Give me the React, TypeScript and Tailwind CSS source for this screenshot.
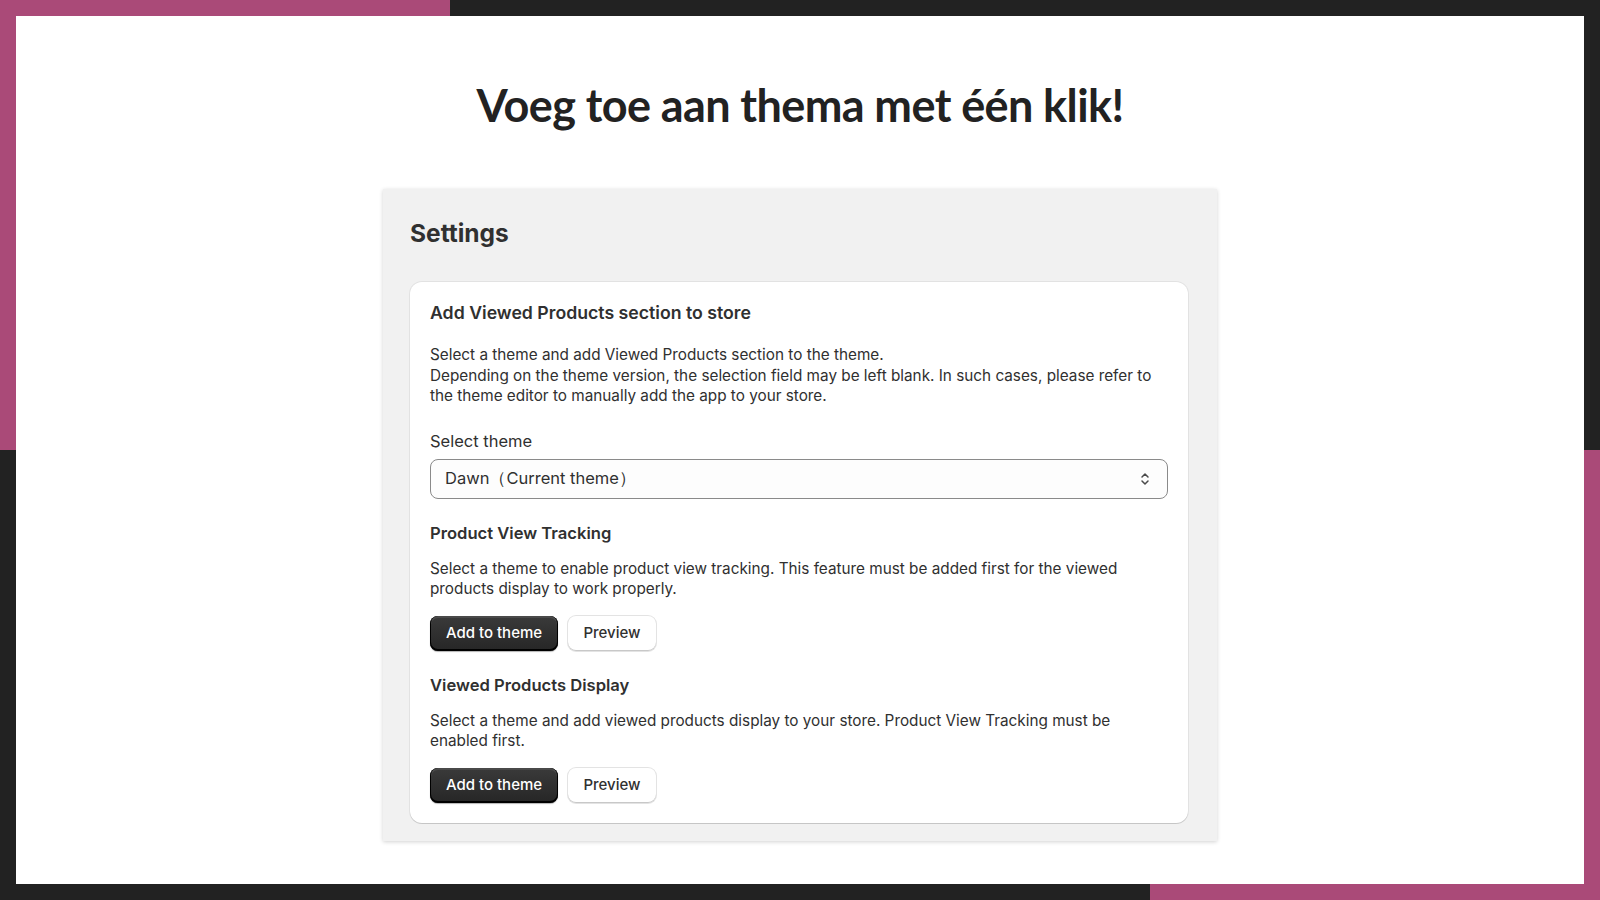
import React from "react";

const inter = { fontFamily: "Inter, 'Noto Sans', sans-serif" };

function Chevrons() {
    return (
        <svg width="12" height="16" viewBox="0 0 12 16" fill="none" stroke="#4a4a4a" strokeWidth="1.5" strokeLinecap="round" strokeLinejoin="round">
            <path d="M3 6l3-3 3 3" />
            <path d="M3 10l3 3 3-3" />
        </svg>
    );
}

function Buttons() {
    return (
        <div className="flex gap-[10px]">
            <button className="h-[35px] w-[128px] rounded-[8px] bg-[linear-gradient(#3a3a3a,#262626)] text-[15px] font-medium text-white shadow-[inset_0_-1px_0_1px_#000,inset_0_1px_0_1px_#4a4a4a,0_1px_1px_rgba(0,0,0,0.3)]">
                Add to theme
            </button>
            <button className="h-[35px] w-[88px] rounded-[8px] bg-white text-[15px] font-medium text-[#303030] shadow-[inset_0_-1px_0_#c8c8c8,0_0_0_1px_#e3e3e3]">
                Preview
            </button>
        </div>
    );
}

export default function App() {
    return (
        <div className="relative h-[900px] w-full overflow-hidden bg-[#222222]">
            <div className="absolute left-0 top-0 h-[450px] w-[450px] bg-[#aa4a78]" />
            <div className="absolute bottom-0 right-0 h-[450px] w-[450px] bg-[#aa4a78]" />
            <div className="relative m-4 flex h-[868px] flex-col items-center bg-white">
                <h1
                    className="mt-[63px] text-[45px] font-bold leading-[52px] tracking-[-0.6px] text-[#222222]"
                    style={{ fontFamily: "Lato, 'Noto Sans', sans-serif" }}
                >
                    Voeg toe aan thema met één klik!
                </h1>

                <div className="mt-[58px] w-[834px] bg-[#f1f1f1] px-[27px] pb-[18px] pt-[28px] shadow-[0_1px_4px_rgba(0,0,0,0.18)]" style={inter}>
                    <h2 className="text-[24.5px] font-bold leading-[32px] text-[#303030]">Settings</h2>

                    <div className="mt-[33px] w-[778px] rounded-[12px] bg-white p-5 shadow-[0_1px_0_rgba(0,0,0,0.12),0_0_0_1px_rgba(0,0,0,0.06)]">
                        <h3 className="text-[17.7px] font-semibold leading-[22px] text-[#303030]">
                            Add Viewed Products section to store
                        </h3>
                        <p className="mt-[21px] text-[15.3px] leading-[20.5px] text-[#303030]">
                            Select a theme and add Viewed Products section to the theme.
                            <br />
                            Depending on the theme version, the selection field may be left blank. In such cases, please refer to the theme editor to manually add the app to your store.
                        </p>

                        <label className="mt-[24px] block text-[16.5px] leading-[20px] text-[#303030]">
                            Select theme
                        </label>
                        <div className="mt-2 flex h-[40px] items-center justify-between rounded-[8px] border border-[#8a8a8a] bg-[#fdfdfd] pl-[14px] pr-[16px]">
                            <span className="text-[16.5px] text-[#303030]">
                                Dawn（Current theme）
                            </span>
                            <Chevrons />
                        </div>

                        <h3 className="mt-[23px] text-[16.6px] font-semibold leading-[22px] text-[#303030]">Product View Tracking</h3>
                        <p className="mt-[15px] text-[15.3px] leading-[20.5px] text-[#303030]">
                            Select a theme to enable product view tracking. This feature must be added first for the viewed products display to work properly.
                        </p>
                        <div className="mt-4">
                            <Buttons />
                        </div>

                        <h3 className="mt-[23px] text-[16.6px] font-semibold leading-[22px] text-[#303030]">Viewed Products Display</h3>
                        <p className="mt-[15px] text-[15.3px] leading-[20.5px] text-[#303030]">
                            Select a theme and add viewed products display to your store. Product View Tracking must be enabled first.
                        </p>
                        <div className="mt-4">
                            <Buttons />
                        </div>
                    </div>
                </div>
            </div>
        </div>
    );
}
